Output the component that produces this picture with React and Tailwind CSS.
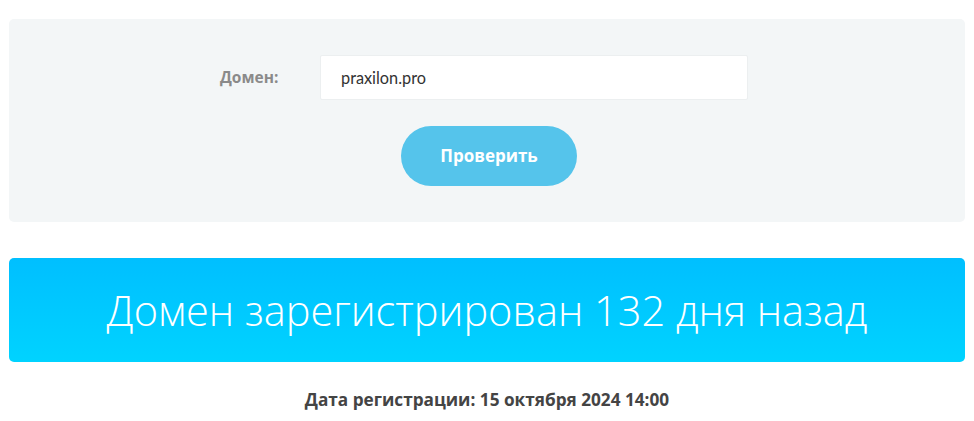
import React from "react";

export default function App() {
  return (
    <div className="min-h-screen bg-white px-[9px] pt-[19px]" style={{ fontFamily: "'Open Sans', 'Noto Sans', sans-serif" }}>
      <div className="rounded-[5px] bg-[#f3f6f7] pt-[36px] pb-[36px]">
        <div className="flex items-center justify-center pr-[6px]">
          <label className="w-[100px] text-[15.5px] font-bold text-[#8a8a8a]">Домен:</label>
          <input
            type="text"
            defaultValue="praxilon.pro"
            className="h-[45px] w-[428px] rounded-[2px] border border-[#eceff0] bg-white px-[20px] text-[16.3px] text-[#333] outline-none"
            style={{ fontFamily: "Lato, 'Open Sans', sans-serif" }}
          />
        </div>
        <div className="mt-[26px] flex justify-center pl-[4px]">
          <button className="h-[60px] w-[176px] rounded-full bg-[#55c4eb] text-[17px] font-bold text-white">
            Проверить
          </button>
        </div>
      </div>

      <div className="mt-[36px] flex h-[104px] items-center justify-center rounded-[5px] bg-gradient-to-b from-[#00bfff] to-[#00d3ff]">
        <h1 className="text-[41.5px] font-[350] text-white">Домен зарегистрирован 132 дня назад</h1>
      </div>

      <p className="mt-[25px] text-center text-[17.2px] font-bold text-[#444]">
        Дата регистрации: 15 октября 2024 14:00
      </p>
    </div>
  );
}
